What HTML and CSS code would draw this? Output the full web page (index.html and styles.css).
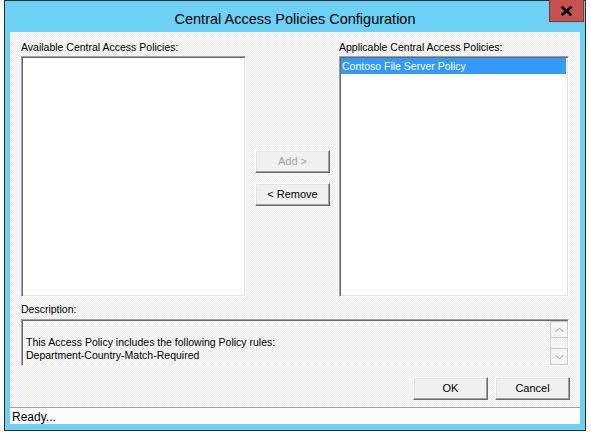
FILE: index.html
```html
<!DOCTYPE html>
<html>
<head>
<meta charset="utf-8">
<link rel="stylesheet" href="styles.css">
</head>
<body>
<div class="window">
  <div class="titlebar">
    <div class="title">Central Access Policies Configuration</div>
    <div class="close"><svg width="11" height="10" viewBox="0 0 11 10"><path d="M1.5 1.5 L9.5 8.5 M9.5 1.5 L1.5 8.5" stroke="#000" stroke-width="2.6" stroke-linecap="square"/></svg></div>
  </div>
  <div class="client">
    <div class="lists">
      <div class="label">Available Central Access Policies:</div>
      <div></div>
      <div class="label">Applicable Central Access Policies:</div>
      <div class="listbox"></div>
      <div class="movebtns">
        <div class="btn disabled">Add &gt;</div>
        <div class="btn">&lt; Remove</div>
      </div>
      <div class="listbox"><div class="item selected">Contoso File Server Policy</div></div>
    </div>
    <div class="desc-label label">Description:</div>
    <div class="descbox">
      <div class="desctext">This Access Policy includes the following Policy rules:<br>Department-Country-Match-Required</div>
      <div class="vscroll">
        <div class="arrow"><svg width="9" height="6" viewBox="0 0 9 6"><path d="M0.5 5 L4.5 1 L8.5 5" fill="none" stroke="#9a9a9a" stroke-width="1"/></svg></div>
        <div class="track"></div>
        <div class="arrow"><svg width="9" height="6" viewBox="0 0 9 6"><path d="M0.5 1 L4.5 5 L8.5 1" fill="none" stroke="#9a9a9a" stroke-width="1"/></svg></div>
      </div>
    </div>
    <div class="actions">
      <div class="btn">OK</div>
      <div class="btn">Cancel</div>
    </div>
    <div class="status">Ready...</div>
  </div>
</div>
</body>
</html>
```
FILE: styles.css
```css
html, body {
  margin: 0;
  padding: 0;
  background: #ffffff;
}
body {
  font-family: "Liberation Sans", Arial, sans-serif;
  font-size: 10.5px;
  color: #000;
}
.window {
  position: relative;
  margin-left: 4px;
  width: 582px;
  height: 431px;
  box-sizing: border-box;
  border: 1px solid #2d2d2d;
  background: #6cd1f5;
  padding: 0 5px 6px 5px;
  display: flex;
  flex-direction: column;
}
.titlebar {
  height: 31px;
  display: flex;
  align-items: center;
  justify-content: center;
}
.title {
  font-size: 14.5px;
  color: #000;
  margin-top: 4px;
}
.close {
  position: absolute;
  top: -1px;
  right: 1px;
  width: 35px;
  height: 22px;
  box-sizing: border-box;
  background: #c75050;
  border: 1px solid #7f3232;
  border-top: none;
  display: flex;
  align-items: center;
  justify-content: center;
}
.client {
  height: 392px;
  background: #f2f2f2;
  background-image: repeating-conic-gradient(#eeeeee 0 25%, #f8f8f8 0 50%);
  background-size: 2px 2px;
  display: flex;
  flex-direction: column;
}
.label {
  line-height: 13px;
  height: 13px;
  white-space: nowrap;
}
.lists {
  display: grid;
  grid-template-columns: 225px 75px 230px;
  grid-template-rows: 13px 241px;
  column-gap: 9px;
  row-gap: 2px;
  padding: 9px 11px 0 11px;
}
.listbox {
  box-sizing: border-box;
  background: #fff;
  border: 1px solid;
  border-color: #a0a0a0 #ffffff #ffffff #a0a0a0;
  box-shadow: inset 1px 1px #6a6a6a, inset -1px -1px #e3e3e3;
  padding: 1px 2px 2px 1px;
}
.item {
  height: 16px;
  line-height: 16px;
  padding-left: 1px;
  font-size: 10.5px;
}
.selected {
  background: #3399ff;
  color: #fff;
}
.movebtns {
  display: flex;
  flex-direction: column;
  gap: 10px;
  padding-top: 94px;
}
.btn {
  box-sizing: border-box;
  width: 75px;
  height: 23px;
  background: #f0f0f0;
  border: 1px solid;
  border-color: #ffffff #696969 #696969 #ffffff;
  box-shadow: inset -1px -1px #a0a0a0, inset 1px 1px #e3e3e3;
  display: flex;
  align-items: center;
  justify-content: center;
  line-height: 13px;
  font-size: 11px;
}
.btn.disabled {
  color: #a0a0a0;
}
.desc-label {
  padding: 6px 11px 0 11px;
  margin-bottom: 3px;
}
.descbox {
  margin: 0 11px;
  height: 48px;
  box-sizing: border-box;
  border: 1px solid;
  border-color: #a0a0a0 #ffffff #ffffff #a0a0a0;
  box-shadow: inset 1px 1px #6a6a6a;
  display: flex;
}
.desctext {
  flex: 1;
  padding: 16px 0 0 4px;
  line-height: 13px;
}
.vscroll {
  width: 18px;
  display: flex;
  flex-direction: column;
  padding: 1px 0 0 0;
}
.arrow {
  box-sizing: border-box;
  height: 17px;
  border: 1px solid #c8c8c8;
  background: #f4f4f4;
  display: flex;
  align-items: center;
  justify-content: center;
}
.track {
  flex: 1;
  border-left: 1px solid #dcdcdc;
  border-right: 1px solid #dcdcdc;
}
.actions {
  display: flex;
  justify-content: flex-end;
  gap: 7px;
  padding: 11px 10px 0 0;
}
.status {
  margin-top: 7px;
  border-top: 1px solid #a0a0a0;
  background: #fcfcfc;
  flex: 1;
  padding: 3px 0 0 2px;
  font-size: 12px;
  line-height: 13px;
}
```
